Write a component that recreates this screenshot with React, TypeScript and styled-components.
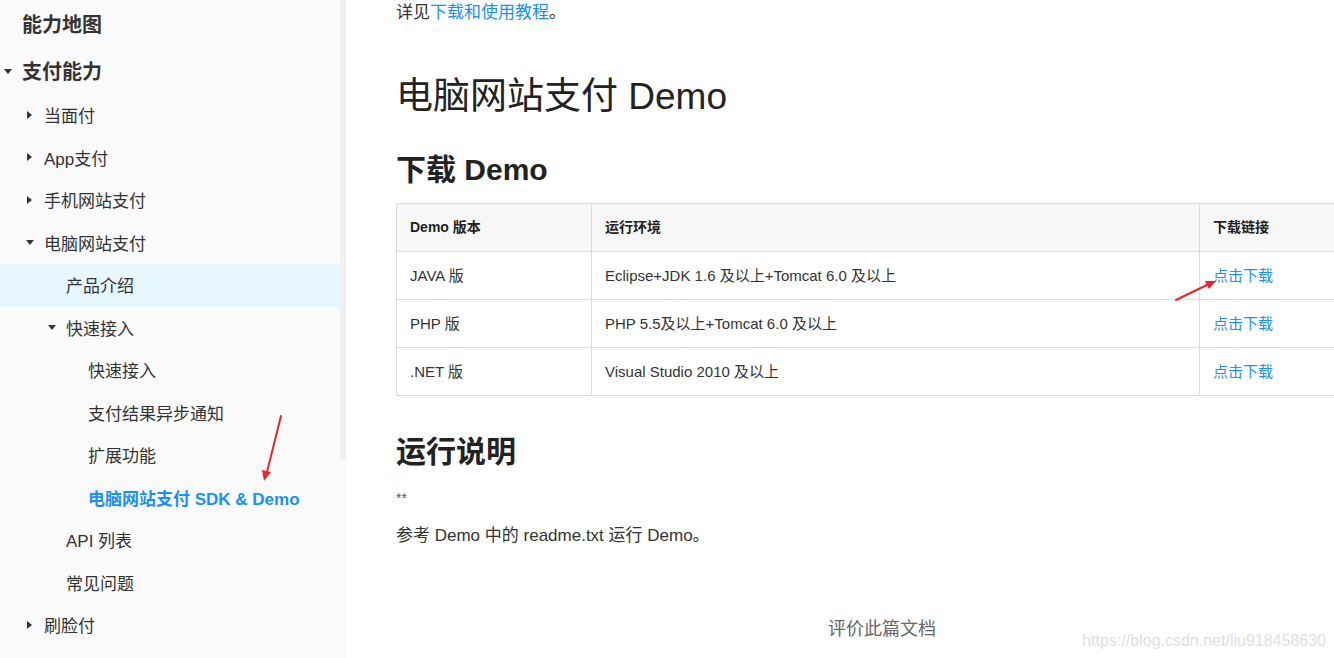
import React from "react";
import styled, { createGlobalStyle } from "styled-components";

const Global = createGlobalStyle`
  html, body { margin: 0; padding: 0; }
  body {
    overflow: hidden;
    font-family: "Liberation Sans", "Noto Sans CJK SC", sans-serif;
    color: #333;
    background: #fff;
  }
`;

const Page = styled.div`
  position: relative;
  display: flex;
  width: 1334px;
  height: 658px;
  overflow: hidden;
`;

const Sidebar = styled.aside`
  position: relative;
  flex: 0 0 346px;
  height: 658px;
  background: #fafafa;
  display: flex;
`;

const Menu = styled.nav`
  flex: 1;
  display: flex;
  flex-direction: column;
`;

const Track = styled.div`
  flex: 0 0 6px;
  display: flex;
  flex-direction: column;
`;

const Thumb = styled.div`
  height: 461px;
  background: #f0f0f0;
  border-radius: 0 0 3px 3px;
`;

const Row = styled.div<{ $level: number; $active?: boolean; $top?: boolean }>`
  display: flex;
  align-items: center;
  flex: 0 0 auto;
  box-sizing: border-box;
  height: ${(p) => (p.$top ? "47px" : "42.5px")};
  padding-left: ${(p) => p.$level * 22}px;
  padding-bottom: ${(p) => (p.$top ? "0" : "1px")};
  background: ${(p) => (p.$active ? "#e6f7ff" : "transparent")};
  font-size: ${(p) => (p.$top ? "20px" : "17px")};
  font-weight: ${(p) => (p.$top ? 700 : 400)};
  color: #333;
`;

const Label = styled.span<{ $current?: boolean }>`
  color: ${(p) => (p.$current ? "#1890ff" : "inherit")};
  font-weight: ${(p) => (p.$current ? 700 : "inherit")};
`;

const CaretWrap = styled.span`
  position: relative;
  display: inline-block;
  width: 0;
  height: 16px;
`;

const Caret = styled.span<{ $open: boolean }>`
  position: absolute;
  top: 50%;
  width: 0;
  height: 0;
  ${(p) =>
    p.$open
      ? `border-left: 4px solid transparent; border-right: 4px solid transparent; border-top: 5px solid #333; left: -18px; margin-top: -2px;`
      : `border-top: 4px solid transparent; border-bottom: 4px solid transparent; border-left: 5px solid #333; left: -17px; margin-top: -4px;`}
`;

const Main = styled.main`
  flex: 1;
  padding-left: 50px;
  overflow: hidden;
  display: flex;
  flex-direction: column;
`;

const Para = styled.p<{ $mt?: number }>`
  margin: ${(p) => p.$mt ?? 0}px 0 0;
  font-size: 17px;
  line-height: 25px;
  color: #333;
`;

const Small = styled.p`
  margin: 16px 0 0;
  font-size: 14px;
  line-height: 24px;
  color: #555;
`;

const Link = styled.a`
  color: #1890ff;
  text-decoration: none;
`;

const H1 = styled.h1`
  margin: 50px 0 0;
  font-size: 37px;
  line-height: 44px;
  font-weight: 400;
  color: #222;
`;

const H2 = styled.h2<{ $mt: number }>`
  margin: ${(p) => p.$mt}px 0 0;
  font-size: 30px;
  line-height: 36px;
  font-weight: 700;
  color: #222;
`;

const Table = styled.table`
  margin-top: 15px;
  border-collapse: collapse;
  table-layout: fixed;
  width: 1000px;
  flex: 0 0 auto;
  font-size: 15px;
  color: #333;
`;

const Th = styled.th<{ $w: number }>`
  box-sizing: border-box;
  width: ${(p) => p.$w}px;
  height: 48px;
  padding: 0 13px 3px;
  text-align: left;
  font-weight: 700;
  font-size: 14px;
  background: #f7f7f7;
  border: 1px solid #dcdcdc;
  color: #222;
`;

const Td = styled.td`
  box-sizing: border-box;
  height: 48px;
  padding: 0 13px 2px;
  border: 1px solid #dcdcdc;
`;

const Footer = styled.div`
  margin-top: 69px;
  padding-left: 432px;
  font-size: 18px;
  line-height: 24px;
  color: #666;
`;

const Watermark = styled.div`
  position: absolute;
  right: 8px;
  bottom: 8px;
  font-size: 16px;
  color: #e0e0e0;
  font-family: "Liberation Sans", sans-serif;
`;

const Overlay = styled.svg`
  position: absolute;
  left: 0;
  top: 0;
  pointer-events: none;
`;

type Item = { label: string; level: number; caret?: "open" | "closed"; top?: boolean; active?: boolean; current?: boolean };

const items: Item[] = [
  { label: "能力地图", level: 1, top: true },
  { label: "支付能力", level: 1, top: true, caret: "open" },
  { label: "当面付", level: 2, caret: "closed" },
  { label: "App支付", level: 2, caret: "closed" },
  { label: "手机网站支付", level: 2, caret: "closed" },
  { label: "电脑网站支付", level: 2, caret: "open" },
  { label: "产品介绍", level: 3, active: true },
  { label: "快速接入", level: 3, caret: "open" },
  { label: "快速接入", level: 4 },
  { label: "支付结果异步通知", level: 4 },
  { label: "扩展功能", level: 4 },
  { label: "电脑网站支付 SDK & Demo", level: 4, current: true },
  { label: "API 列表", level: 3 },
  { label: "常见问题", level: 3 },
  { label: "刷脸付", level: 2, caret: "closed" },
];

const rows = [
  ["JAVA 版", "Eclipse+JDK 1.6 及以上+Tomcat 6.0 及以上"],
  ["PHP 版", "PHP 5.5及以上+Tomcat 6.0 及以上"],
  [".NET 版", "Visual Studio 2010 及以上"],
];

export default function App() {
  return (
    <>
      <Global />
      <Page>
        <Sidebar>
          <Menu>
            {items.map((it, i) => (
              <Row key={i} $level={it.level} $top={it.top} $active={it.active}>
                {it.caret && (
                  <CaretWrap>
                    <Caret $open={it.caret === "open"} />
                  </CaretWrap>
                )}
                <Label $current={it.current}>{it.label}</Label>
              </Row>
            ))}
          </Menu>
          <Track>
            <Thumb />
          </Track>
        </Sidebar>
        <Main>
          <Para>
            详见<Link href="#">下载和使用教程</Link>。
          </Para>
          <H1>电脑网站支付 Demo</H1>
          <H2 $mt={33}>下载 Demo</H2>
          <Table>
            <thead>
              <tr>
                <Th $w={195}>Demo 版本</Th>
                <Th $w={608}>运行环境</Th>
                <Th $w={197}>下载链接</Th>
              </tr>
            </thead>
            <tbody>
              {rows.map((r) => (
                <tr key={r[0]}>
                  <Td>{r[0]}</Td>
                  <Td>{r[1]}</Td>
                  <Td>
                    <Link href="#">点击下载</Link>
                  </Td>
                </tr>
              ))}
            </tbody>
          </Table>
          <H2 $mt={38}>运行说明</H2>
          <Small>**</Small>
          <Para $mt={13}>参考 Demo 中的 readme.txt 运行 Demo。</Para>
          <Footer>评价此篇文档</Footer>
        </Main>
        <Watermark>https://blog.csdn.net/liu918458630</Watermark>
        <Overlay width="1334" height="658" viewBox="0 0 1334 658">
          <g stroke="#e8262a" strokeWidth="2" fill="#e8262a" strokeLinecap="round">
            <line x1="281" y1="416" x2="267" y2="472" />
            <polygon points="264,481 262,470 271,472" stroke="none" />
            <line x1="1176" y1="300" x2="1207" y2="285" />
            <polygon points="1216,281 1205,281 1209,289" stroke="none" />
          </g>
        </Overlay>
      </Page>
    </>
  );
}
